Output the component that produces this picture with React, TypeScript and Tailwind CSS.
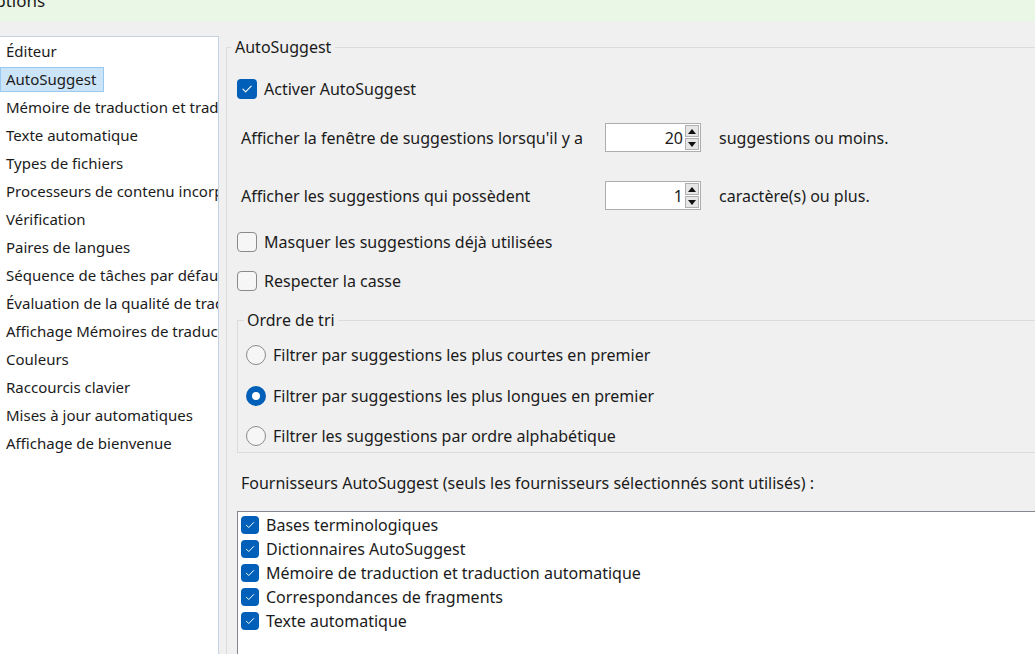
const navItems = [
  "Éditeur",
  "AutoSuggest",
  "Mémoire de traduction et traduction automatique",
  "Texte automatique",
  "Types de fichiers",
  "Processeurs de contenu incorporé",
  "Vérification",
  "Paires de langues",
  "Séquence de tâches par défaut",
  "Évaluation de la qualité de traduction",
  "Affichage Mémoires de traduction",
  "Couleurs",
  "Raccourcis clavier",
  "Mises à jour automatiques",
  "Affichage de bienvenue",
];

const providers = [
  "Bases terminologiques",
  "Dictionnaires AutoSuggest",
  "Mémoire de traduction et traduction automatique",
  "Correspondances de fragments",
  "Texte automatique",
];

const Check = ({ checked, size = 20 }: { checked: boolean; size?: number }) => {
  if (!checked) {
    return (
      <span
        className="shrink-0 rounded-[4px] border border-[#8a8a8a] bg-[#f6f6f6]"
        style={{ width: size, height: size }}
      />
    );
  }
  return (
    <span
      className="shrink-0 rounded-[4px] bg-[#005fb8] flex items-center justify-center"
      style={{ width: size, height: size }}
    >
      <svg width={size} height={size} viewBox="0 0 20 20" fill="none">
        <path d="M6 10.2l2.6 2.6L14.2 7.2" stroke="white" strokeWidth="1.1" strokeLinecap="round" strokeLinejoin="round" />
      </svg>
    </span>
  );
};

const Radio = ({ checked }: { checked: boolean }) =>
  checked ? (
    <span className="shrink-0 w-[20px] h-[20px] rounded-full bg-[#005fb8] flex items-center justify-center">
      <span className="w-[8px] h-[8px] rounded-full bg-white" />
    </span>
  ) : (
    <span className="shrink-0 w-[20px] h-[20px] rounded-full border border-[#8a8a8a] bg-[#f6f6f6]" />
  );

const Spinner = ({ value }: { value: number }) => (
  <div className="w-[96px] h-[29px] bg-white border border-[#adadad] flex items-center justify-end pr-[1px]">
    <span className="pr-[2px] text-[#1b1b1b]">{value}</span>
    <div className="flex flex-col gap-[1px]">
      <span className="w-[14px] h-[12px] bg-[#e6e6e6] border border-[#b0b0b0] flex items-center justify-center">
        <svg width="8" height="5" viewBox="0 0 8 5"><path d="M0 5L4 0L8 5Z" fill="#111" /></svg>
      </span>
      <span className="w-[14px] h-[12px] bg-[#e6e6e6] border border-[#b0b0b0] flex items-center justify-center">
        <svg width="8" height="5" viewBox="0 0 8 5"><path d="M0 0L8 0L4 5Z" fill="#111" /></svg>
      </span>
    </div>
  </div>
);

export default function App() {
  return (
    <div className="w-[1035px] h-[654px] overflow-hidden bg-[#f0f0f0] text-[#1b1b1b] font-['Noto_Sans',sans-serif] text-[16px] flex flex-col">
      {/* title bar */}
      <div className="h-[22px] shrink-0 bg-[#eaf7e6] overflow-hidden">
        <div className="-mt-[10px] -ml-[18px] text-[17px] leading-[22px] whitespace-nowrap">Options</div>
      </div>
      <div className="h-[14px] shrink-0" />

      <div className="flex flex-1 min-h-0">
        {/* left nav */}
        <div className="w-[219px] shrink-0 bg-white border-t border-r border-[#c3d2e2] overflow-hidden text-[15px]">
          {navItems.map((item, i) => (
            <div key={item} className="h-[28px] flex items-center whitespace-nowrap">
              {i === 1 ? (
                <span className="h-[25px] flex items-center pl-[5px] pr-[7px] bg-[#cce4f7] border border-[#99c9ef]">{item}</span>
              ) : (
                <span className="pl-[6px]">{item}</span>
              )}
            </div>
          ))}
        </div>

        {/* right content */}
        <div className="flex-1 min-w-0 pl-[7px] pt-[1px]">
          <fieldset className="border-t border-l border-[#dcdcdc] h-[700px] pl-[10px] flex flex-col">
            <legend className="-ml-[6px] px-[4px] h-[20px] leading-[20px]">AutoSuggest</legend>

            <label className="mt-[22px] h-[20px] flex items-center gap-[7px] whitespace-nowrap">
              <Check checked />
              Activer AutoSuggest
            </label>

            <div className="mt-[24px] flex items-center pl-[4px] whitespace-nowrap">
              <span className="w-[364px]">Afficher la fenêtre de suggestions lorsqu'il y a</span>
              <Spinner value={20} />
              <span className="ml-[18px]">suggestions ou moins.</span>
            </div>

            <div className="mt-[29px] flex items-center pl-[4px] whitespace-nowrap">
              <span className="w-[364px]">Afficher les suggestions qui possèdent</span>
              <Spinner value={1} />
              <span className="ml-[18px]">caractère(s) ou plus.</span>
            </div>

            <label className="mt-[22px] h-[20px] flex items-center gap-[7px] whitespace-nowrap">
              <Check checked={false} />
              Masquer les suggestions déjà utilisées
            </label>
            <label className="mt-[19px] h-[20px] flex items-center gap-[7px] whitespace-nowrap">
              <Check checked={false} />
              Respecter la casse
            </label>

            <fieldset className="mt-[19px] border-t border-l border-b border-[#dcdcdc] pl-[8px] pb-[6px] flex flex-col">
              <legend className="-ml-[2px] px-[3px] h-[20px] leading-[20px]">Ordre de tri</legend>
              <label className="mt-[15px] h-[20px] flex items-center gap-[7px] whitespace-nowrap">
                <Radio checked={false} />
                Filtrer par suggestions les plus courtes en premier
              </label>
              <label className="mt-[21px] h-[20px] flex items-center gap-[7px] whitespace-nowrap">
                <Radio checked />
                Filtrer par suggestions les plus longues en premier
              </label>
              <label className="mt-[20px] h-[20px] flex items-center gap-[7px] whitespace-nowrap">
                <Radio checked={false} />
                Filtrer les suggestions par ordre alphabétique
              </label>
            </fieldset>

            <div className="mt-[20px] h-[20px] leading-[20px] pl-[4px] whitespace-nowrap">
              Fournisseurs AutoSuggest (seuls les fournisseurs sélectionnés sont utilisés) :
            </div>

            <div className="mt-[18px] flex-1 bg-white border-t border-l border-[#828790] pt-[1px] pl-[3px]">
              {providers.map((p) => (
                <div key={p} className="h-[24px] flex items-center gap-[7px] whitespace-nowrap">
                  <Check checked size={18} />
                  {p}
                </div>
              ))}
            </div>
          </fieldset>
        </div>
      </div>
    </div>
  );
}
